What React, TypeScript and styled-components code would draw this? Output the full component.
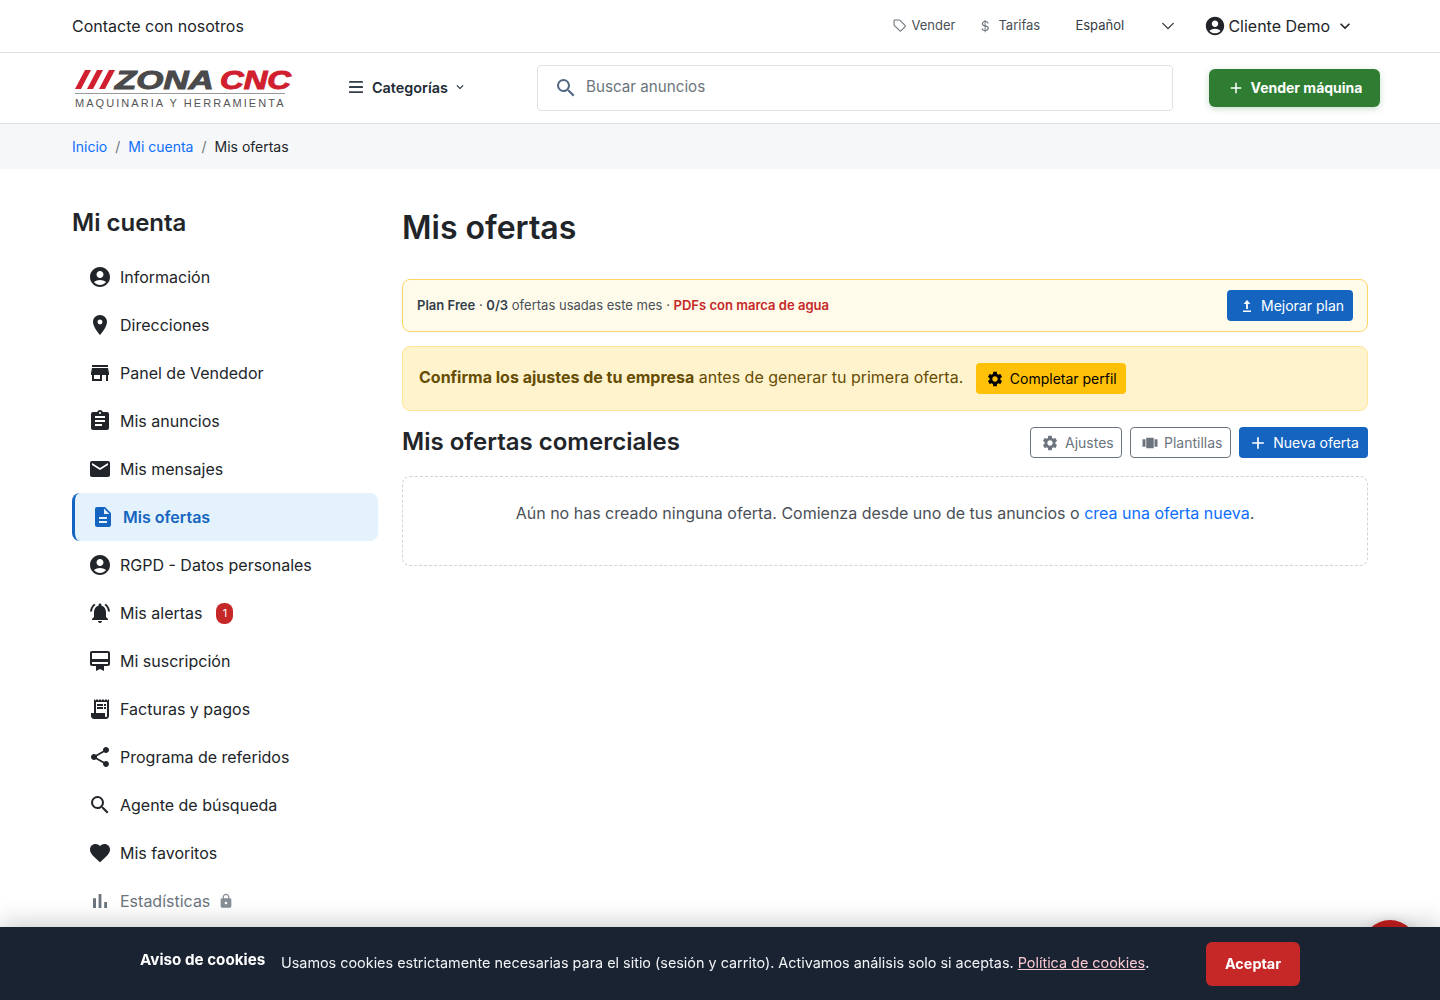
import React from "react";
import styled, { createGlobalStyle } from "styled-components";
import {
  MdAccountCircle, MdPlace, MdStore, MdAssignment, MdEmail, MdDescription,
  MdNotificationsActive, MdCardMembership, MdReceiptLong, MdShare, MdSearch,
  MdFavorite, MdLock, MdSettings, MdViewCarousel, MdAdd, MdExpandMore,
} from "react-icons/md";
import { BsCurrencyDollar } from "react-icons/bs";

const Global = createGlobalStyle`
  html, body { margin: 0; padding: 0; background: #fff; }
  body { font-family: Inter, "Liberation Sans", sans-serif; color: #212529; font-size: 16px; line-height: 1.5; }
  * { box-sizing: border-box; }
  a { text-decoration: none; }
`;

const Container = styled.div`
  width: 1320px;
  margin: 0 auto;
  padding: 0 12px;
  display: flex;
  align-items: center;
`;
const TopBar = styled.div`
  height: 53px;
  border-bottom: 1px solid #dee2e6;
  ${Container} { height: 52px; justify-content: space-between; padding-bottom: 1px; }
`;
const ContactLink = styled.a`
  color: #212529;
  font-size: 16px;
`;
const TopRight = styled.div`
  display: flex;
  align-items: center;
`;
const TopLink = styled.a<{ $w: number; $gap: number }>`
  display: flex;
  align-items: center;
  width: ${(p) => p.$w}px;
  gap: ${(p) => p.$gap}px;
  font-size: 13px;
  color: #495057;
  svg { color: #6c757d; flex: none; }
`;
const LangSelect = styled.div`
  width: 116px;
  display: flex;
  align-items: center;
  justify-content: space-between;
  font-size: 13px;
  color: #343a40;
  padding-right: 16px;
`;
const UserMenu = styled.div`
  display: flex;
  align-items: center;
  margin-left: 13px;
  margin-right: 13px;
  font-size: 16px;
  color: #212529;
  svg:first-child { margin-right: 2px; }
  svg:last-child { margin-left: 5px; }
`;
const NavBar = styled.div`
  height: 71px;
  border-bottom: 1px solid #dee2e6;
  ${Container} { height: 70px; }
`;
const Logo = styled.div`
  width: 220px;
  height: 42px;
  flex: none;
  margin-top: 1px;
  display: flex;
  flex-direction: column;
  user-select: none;
`;
const LogoTop = styled.div`
  height: 24px;
  display: flex;
  align-items: center;
  padding-left: 3px;
`;
const LogoWord = styled.span<{ $c: string; $w: number; $s: number }>`
  display: block;
  width: ${(p) => p.$w}px;
  flex: none;
  font-family: "Liberation Sans", sans-serif;
  font-weight: 700;
  font-style: italic;
  font-size: 26px;
  line-height: 24px;
  color: ${(p) => p.$c};
  -webkit-text-stroke: 1px ${(p) => p.$c};
  transform-origin: left center;
  transform: scaleX(${(p) => p.$s});
  white-space: nowrap;
`;
const LogoRule = styled.div`
  height: 1px;
  background: #9a9a9a;
  margin: 1px 7px 0 3px;
`;
const LogoTag = styled.div`
  font-family: "Liberation Sans", sans-serif;
  font-size: 11px;
  line-height: 13px;
  margin-top: 3px;
  padding-left: 3px;
  letter-spacing: 2.05px;
  color: #555;
  white-space: nowrap;
`;
const CatButton = styled.div`
  display: flex;
  align-items: center;
  margin-left: 54px;
  width: 191px;
  flex: none;
  font-size: 14.4px;
  font-weight: 600;
  color: #212b36;
  margin-top: -1px;
  svg:first-child { margin: 0 9px 0 3px; color: #343f4c; }
  svg:last-child { margin-left: 5px; }
`;
const SearchBox = styled.div`
  width: 636px;
  height: 46px;
  flex: none;
  border: 1px solid #dee2e6;
  border-radius: 4px;
  display: flex;
  align-items: center;
  padding: 0 0 1px 16px;
  gap: 8px;
  font-size: 15.2px;
  color: #6c757d;
  svg { color: #52677f; }
`;
const SellButton = styled.a`
  margin-left: 36px;
  width: 171px;
  height: 38px;
  flex: none;
  background: #2e7d32;
  border-radius: 6px;
  color: #fff;
  font-size: 14px;
  font-weight: 700;
  display: flex;
  align-items: center;
  justify-content: center;
  gap: 6px;
  padding-bottom: 1px;
  box-shadow: 0 2px 6px rgba(46, 125, 50, 0.25);
`;
const CrumbBar = styled.div`
  height: 45px;
  background: #f6f7f9;
  ${Container} { height: 45px; font-size: 14px; }
`;
const CrumbLink = styled.a`
  color: #0d6efd;
`;
const CrumbSep = styled.span`
  color: #6c757d;
  padding: 0 8px;
`;
const Page = styled(Container)`
  align-items: flex-start;
  padding-top: 36px;
`;
const Sidebar = styled.aside`
  width: 306px;
  flex: none;
  margin-right: 24px;
`;
const SideTitle = styled.h2`
  margin: 0 0 12px;
  font-size: 24px;
  font-weight: 600;
  line-height: 36px;
  color: #212529;
`;
const SideList = styled.nav`
  display: flex;
  flex-direction: column;
`;
const SideItem = styled.a<{ $active?: boolean; $muted?: boolean }>`
  height: 48px;
  display: flex;
  align-items: center;
  gap: 8px;
  padding-left: 16px;
  font-size: 16px;
  border-radius: 8px;
  color: ${(p) => (p.$active ? "#1565c0" : p.$muted ? "#6c757d" : "#212529")};
  font-weight: ${(p) => (p.$active ? 600 : 400)};
  background: ${(p) => (p.$active ? "#e3f2fd" : "transparent")};
  border-left: ${(p) => (p.$active ? "3px solid #1565c0" : "none")};
  svg { flex: none; }
`;
const Badge = styled.span`
  width: 17px;
  height: 21px;
  border-radius: 8px;
  margin-left: 6px;
  background: #c62828;
  color: #fff;
  font-size: 11px;
  display: flex;
  align-items: center;
  justify-content: center;
`;
const LockMark = styled.span`
  display: flex;
  color: #868e96;
`;
const Main = styled.main`
  flex: 1;
  min-width: 0;
`;
const PageTitle = styled.h1`
  margin: 0 0 28px;
  font-size: 32px;
  font-weight: 600;
  line-height: 46px;
  color: #212529;
`;
const PlanBanner = styled.div`
  height: 53px;
  background: #fffbeb;
  border: 1px solid #ffd666;
  border-radius: 8px;
  padding: 0 14px;
  display: flex;
  align-items: center;
  justify-content: space-between;
  font-size: 13.04px;
  color: #495057;
  b { font-weight: 600; color: #343f4c; }
`;
const PdfNote = styled.span`
  color: #c62828;
  font-weight: 600;
`;
const Btn = styled.a<{ $bg: string; $fg: string; $w: number; $gap?: number }>`
  width: ${(p) => p.$w}px;
  height: 31px;
  flex: none;
  display: flex;
  align-items: center;
  justify-content: center;
  gap: ${(p) => p.$gap ?? 6}px;
  border-radius: 4px;
  font-size: 14px;
  background: ${(p) => p.$bg};
  color: ${(p) => p.$fg};
`;
const UpgradeBtn = styled(Btn)`
  padding-left: 7px;
`;
const OutlineBtn = styled.a<{ $w: number; $gap: number }>`
  width: ${(p) => p.$w}px;
  height: 31px;
  flex: none;
  display: flex;
  align-items: center;
  padding-left: 10px;
  gap: ${(p) => p.$gap}px;
  border: 1px solid #6c757d;
  border-radius: 4px;
  font-size: 14px;
  background: #fff;
  color: #6c757d;
`;
const ProfileBanner = styled.div`
  height: 65px;
  margin-top: 14px;
  background: #fff3cd;
  border: 1px solid #ffe69c;
  border-radius: 8px;
  padding: 0 16px;
  display: flex;
  align-items: center;
  gap: 13px;
  font-size: 16px;
  color: #664d03;
  b { font-weight: 700; }
`;
const ProfileText = styled.span`
  padding-bottom: 3px;
`;
const OffersHead = styled.div`
  margin-top: 16px;
  display: flex;
  align-items: center;
  justify-content: space-between;
`;
const OffersTitle = styled.h3`
  margin: 0;
  padding-bottom: 2px;
  font-size: 24px;
  font-weight: 600;
  line-height: 29px;
  color: #212529;
`;
const OffersActions = styled.div`
  display: flex;
  gap: 8px;
`;
const EmptyBox = styled.div`
  margin-top: 18px;
  height: 90px;
  border: 1px dashed #ced4da;
  border-radius: 8px;
  padding-top: 24px;
  text-align: center;
  font-size: 16px;
  color: #495057;
  a { color: #0d6efd; }
`;
const ChatBubble = styled.div`
  position: fixed;
  right: 22px;
  bottom: 24px;
  width: 56px;
  height: 56px;
  border-radius: 50%;
  background: #c41e1e;
  box-shadow: 0 4px 14px rgba(0, 0, 0, 0.25);
`;
const CookieBar = styled.div`
  position: fixed;
  left: 0;
  right: 0;
  bottom: 0;
  height: 73px;
  background: #1a2332;
  box-shadow: 0 -4px 24px rgba(0, 0, 0, 0.2);
  color: #fff;
  display: flex;
  align-items: center;
  padding-left: 140px;
`;
const CookieTitle = styled.strong`
  font-size: 15.2px;
  font-weight: 700;
  width: 141px;
  flex: none;
  white-space: nowrap;
  margin-top: -7px;
`;
const CookieText = styled.span`
  font-size: 14.4px;
  width: 925px;
  flex: none;
  white-space: nowrap;
  color: #f1f3f5;
  margin-top: -2px;
  a { color: #f8c9d0; text-decoration: underline; }
`;
const AcceptBtn = styled.a`
  width: 94px;
  height: 44px;
  flex: none;
  background: #c62828;
  border-radius: 6px;
  color: #fff;
  font-size: 14.4px;
  font-weight: 700;
  display: flex;
  align-items: center;
  justify-content: center;
`;

const BarChartIcon = () => (
  <svg width="24" height="24" viewBox="0 0 24 24" fill="currentColor">
    <path d="M5 9.2h3V19H5zM10.6 5h2.8v14h-2.8zm5.6 8H19v6h-2.8z" />
  </svg>
);
const TagIcon = () => (
  <svg width="15" height="15" viewBox="-1 0 15 15" fill="none" stroke="currentColor" strokeWidth="1.1" strokeLinejoin="round">
    <path d="M2.6 2h4.6c.3 0 .6.1.8.3l5 5.1c.4.4.4 1 0 1.4l-3.9 3.9c-.4.4-1 .4-1.4 0l-5.2-5c-.3-.2-.4-.5-.4-.8V3.1C2 2.5 2.1 2 2.6 2z" />
  </svg>
);
const MenuIcon = () => (
  <svg width="14" height="12" viewBox="0 0 14 12" fill="currentColor">
    <rect x="0" y="0" width="14" height="1.8" rx="0.4" />
    <rect x="0" y="5.1" width="14" height="1.8" rx="0.4" />
    <rect x="0" y="10.2" width="14" height="1.8" rx="0.4" />
  </svg>
);
const UpgradeIcon = () => (
  <svg width="8" height="12" viewBox="0 0 8 12" fill="currentColor">
    <path d="M4 0l3.4 4H4.9v5H3.1V4H.6zM0 10.4h8V12H0z" />
  </svg>
);

const items: { label: string; Icon: React.ComponentType<{ size?: number }> }[] = [
  { label: "Información", Icon: MdAccountCircle },
  { label: "Direcciones", Icon: MdPlace },
  { label: "Panel de Vendedor", Icon: MdStore },
  { label: "Mis anuncios", Icon: MdAssignment },
  { label: "Mis mensajes", Icon: MdEmail },
  { label: "Mis ofertas", Icon: MdDescription },
  { label: "RGPD - Datos personales", Icon: MdAccountCircle },
  { label: "Mis alertas", Icon: MdNotificationsActive },
  { label: "Mi suscripción", Icon: MdCardMembership },
  { label: "Facturas y pagos", Icon: MdReceiptLong },
  { label: "Programa de referidos", Icon: MdShare },
  { label: "Agente de búsqueda", Icon: MdSearch },
  { label: "Mis favoritos", Icon: MdFavorite },
];

export default function App() {
  return (
    <>
      <Global />
      <TopBar>
        <Container>
          <ContactLink>Contacte con nosotros</ContactLink>
          <TopRight>
            <TopLink $w={87} $gap={5}><TagIcon />Vender</TopLink>
            <TopLink $w={97} $gap={6}><BsCurrencyDollar size={14} />Tarifas</TopLink>
            <LangSelect>
              Español
              <svg width="14" height="14" viewBox="0 0 16 16" fill="none" stroke="#343a40" strokeWidth="1.6" strokeLinecap="round" strokeLinejoin="round">
                <path d="M2 5l6 6 6-6" />
              </svg>
            </LangSelect>
            <UserMenu>
              <MdAccountCircle size={22} />
              Cliente Demo
              <MdExpandMore size={20} />
            </UserMenu>
          </TopRight>
        </Container>
      </TopBar>
      <NavBar>
        <Container>
          <Logo>
            <LogoTop>
              <svg width="40" height="19" viewBox="0 0 40 19" fill="#d0202f">
                <polygon points="0,19 10,0 16,0 6,19" />
                <polygon points="12,19 22,0 28,0 18,19" />
                <polygon points="24,19 34,0 40,0 30,19" />
              </svg>
              <LogoWord $c="#4a4a4c" $w={105} $s={1.34}>ZONA</LogoWord>
              <LogoWord $c="#d0202f" $w={72} $s={1.26}>CNC</LogoWord>
            </LogoTop>
            <LogoRule />
            <LogoTag>MAQUINARIA Y HERRAMIENTA</LogoTag>
          </Logo>
          <CatButton>
            <MenuIcon />
            Categorías
            <MdExpandMore size={14} />
          </CatButton>
          <SearchBox>
            <MdSearch size={24} />
            Buscar anuncios
          </SearchBox>
          <SellButton><MdAdd size={18} />Vender máquina</SellButton>
        </Container>
      </NavBar>
      <CrumbBar>
        <Container>
          <CrumbLink>Inicio</CrumbLink>
          <CrumbSep>/</CrumbSep>
          <CrumbLink>Mi cuenta</CrumbLink>
          <CrumbSep>/</CrumbSep>
          <span>Mis ofertas</span>
        </Container>
      </CrumbBar>
      <Page>
        <Sidebar>
          <SideTitle>Mi cuenta</SideTitle>
          <SideList>
            {items.map(({ label, Icon }) => (
              <SideItem key={label} $active={label === "Mis ofertas"}>
                <Icon size={24} />
                {label}
                {label === "Mis alertas" && <Badge>1</Badge>}
              </SideItem>
            ))}
            <SideItem $muted>
              <BarChartIcon />
              Estadísticas
              <LockMark><MdLock size={16} /></LockMark>
            </SideItem>
          </SideList>
        </Sidebar>
        <Main>
          <PageTitle>Mis ofertas</PageTitle>
          <PlanBanner>
            <span>
              <b>Plan Free</b> · <b>0/3</b> ofertas usadas este mes · <PdfNote>PDFs con marca de agua</PdfNote>
            </span>
            <UpgradeBtn $bg="#1565c0" $fg="#fff" $w={126} $gap={10}><UpgradeIcon />Mejorar plan</UpgradeBtn>
          </PlanBanner>
          <ProfileBanner>
            <ProfileText><b>Confirma los ajustes de tu empresa</b> antes de generar tu primera oferta.</ProfileText>
            <Btn $bg="#ffc107" $fg="#000" $w={150}><MdSettings size={18} />Completar perfil</Btn>
          </ProfileBanner>
          <OffersHead>
            <OffersTitle>Mis ofertas comerciales</OffersTitle>
            <OffersActions>
              <OutlineBtn $w={92} $gap={6}><MdSettings size={18} />Ajustes</OutlineBtn>
              <OutlineBtn $w={101} $gap={5}><MdViewCarousel size={18} />Plantillas</OutlineBtn>
              <Btn $bg="#1565c0" $fg="#fff" $w={129} $gap={5}><MdAdd size={20} />Nueva oferta</Btn>
            </OffersActions>
          </OffersHead>
          <EmptyBox>
            Aún no has creado ninguna oferta. Comienza desde uno de tus anuncios o <a>crea una oferta nueva</a>.
          </EmptyBox>
        </Main>
      </Page>
      <ChatBubble />
      <CookieBar>
        <CookieTitle>Aviso de cookies</CookieTitle>
        <CookieText>
          Usamos cookies estrictamente necesarias para el sitio (sesión y carrito). Activamos análisis solo si aceptas. <a>Política de cookies</a>.
        </CookieText>
        <AcceptBtn>Aceptar</AcceptBtn>
      </CookieBar>
    </>
  );
}
